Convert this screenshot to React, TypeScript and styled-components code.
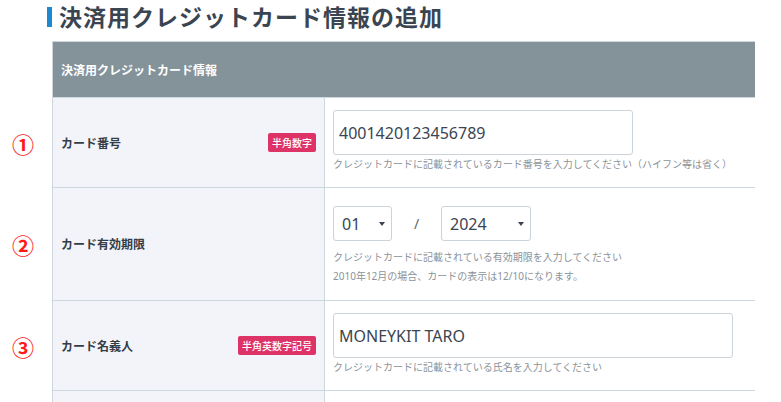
import React from 'react';
import styled, { createGlobalStyle } from 'styled-components';

const GlobalStyle = createGlobalStyle`
  html, body {
    margin: 0;
    padding: 0;
    background: #ffffff;
  }
  body {
    font-family: "Noto Sans", "Noto Sans CJK JP", sans-serif;
    color: #333d47;
  }
`;

const Page = styled.div`
  width: 781px;
  padding-top: 4px;
`;

const Title = styled.h2`
  margin: 0 0 11px 47px;
  display: flex;
  align-items: center;
  gap: 7px;
  font-size: 23px;
  line-height: 26px;
  font-weight: 700;
  color: #3a4551;
  letter-spacing: 1px;
  &::before {
    content: '';
    width: 5px;
    height: 20px;
    background: #1e88d0;
  }
`;

const Table = styled.div`
  margin-left: 52px;
  width: 702px;
  border-top: 1px solid #cfd7de;
  border-left: 1px solid #cfd7de;
`;

const Header = styled.div`
  height: 55px;
  display: flex;
  align-items: center;
  padding-left: 8px;
  background: #84939a;
  color: #ffffff;
  font-size: 12px;
  font-weight: 700;
  border-bottom: 1px solid #cfd7de;
`;

const Row = styled.div<{ $minHeight?: number }>`
  position: relative;
  display: grid;
  grid-template-columns: 272px 1fr;
  min-height: ${(p) => p.$minHeight ?? 0}px;
  border-bottom: 1px solid #cfd7de;
`;

const StepMark = styled.span`
  position: absolute;
  left: -41px;
  top: 50%;
  transform: translateY(-50%);
  font-family: "Noto Sans CJK JP", sans-serif;
  font-size: 22px;
  font-weight: 700;
  color: #ff1a1a;
  line-height: 1;
`;

const LabelCell = styled.div`
  display: flex;
  align-items: center;
  justify-content: space-between;
  padding: 0 8px 0 8px;
  background: #f3f4f9;
  border-right: 1px solid #cfd7de;
`;

const Label = styled.span`
  font-size: 12px;
  font-weight: 700;
  color: #333d47;
`;

const Badge = styled.span`
  padding: 0 4px;
  height: 19px;
  display: inline-flex;
  align-items: center;
  border-radius: 2px;
  background: #dd3366;
  color: #ffffff;
  font-size: 10px;
  font-weight: 500;
`;

const FieldCell = styled.div<{ $top?: number }>`
  padding: ${(p) => p.$top ?? 12}px 9px 14px 8px;
`;

const TextInput = styled.div<{ $width: number }>`
  box-sizing: border-box;
  width: ${(p) => p.$width}px;
  height: 45px;
  display: flex;
  align-items: center;
  padding: 0 5px;
  border: 1px solid #ccd3da;
  border-radius: 3px;
  font-size: 16px;
  color: #3a4551;
`;

const Help = styled.p`
  margin: 0;
  font-size: 10px;
  line-height: 18px;
  color: #8b939a;
`;

const HelpBlock = styled.div`
  margin-top: 7px;
  ${Help} {
    line-height: 19px;
  }
`;

const DateRow = styled.div`
  display: flex;
  align-items: center;
`;

const SelectBox = styled.div<{ $width: number }>`
  box-sizing: border-box;
  width: ${(p) => p.$width}px;
  height: 35px;
  display: flex;
  align-items: center;
  justify-content: space-between;
  padding: 0 6px 0 8px;
  border: 1px solid #ccd3da;
  border-radius: 3px;
  font-size: 16px;
  color: #3a4551;
  &::after {
    content: '';
    border-left: 3.5px solid transparent;
    border-right: 3.5px solid transparent;
    border-top: 4px solid #3a4551;
  }
`;

const Slash = styled.span`
  width: 49px;
  text-align: center;
  font-size: 14px;
  color: #5a6570;
`;

export default function App() {
  return (
    <Page>
      <GlobalStyle />
      <Title>決済用クレジットカード情報の追加</Title>
      <Table>
        <Header>決済用クレジットカード情報</Header>

        <Row>
          <StepMark>①</StepMark>
          <LabelCell>
            <Label>カード番号</Label>
            <Badge>半角数字</Badge>
          </LabelCell>
          <FieldCell>
            <TextInput $width={300}>4001420123456789</TextInput>
            <Help>クレジットカードに記載されているカード番号を入力してください（ハイフン等は省く）</Help>
          </FieldCell>
        </Row>

        <Row>
          <StepMark>②</StepMark>
          <LabelCell>
            <Label>カード有効期限</Label>
          </LabelCell>
          <FieldCell $top={18}>
            <DateRow>
              <SelectBox $width={59}>01</SelectBox>
              <Slash>/</Slash>
              <SelectBox $width={90}>2024</SelectBox>
            </DateRow>
            <HelpBlock>
              <Help>クレジットカードに記載されている有効期限を入力してください</Help>
              <Help>2010年12月の場合、カードの表示は12/10になります。</Help>
            </HelpBlock>
          </FieldCell>
        </Row>

        <Row>
          <StepMark>③</StepMark>
          <LabelCell>
            <Label>カード名義人</Label>
            <Badge>半角英数字記号</Badge>
          </LabelCell>
          <FieldCell>
            <TextInput $width={400}>MONEYKIT TARO</TextInput>
            <Help>クレジットカードに記載されている氏名を入力してください</Help>
          </FieldCell>
        </Row>

        <Row $minHeight={60}>
          <LabelCell />
          <FieldCell />
        </Row>
      </Table>
    </Page>
  );
}
